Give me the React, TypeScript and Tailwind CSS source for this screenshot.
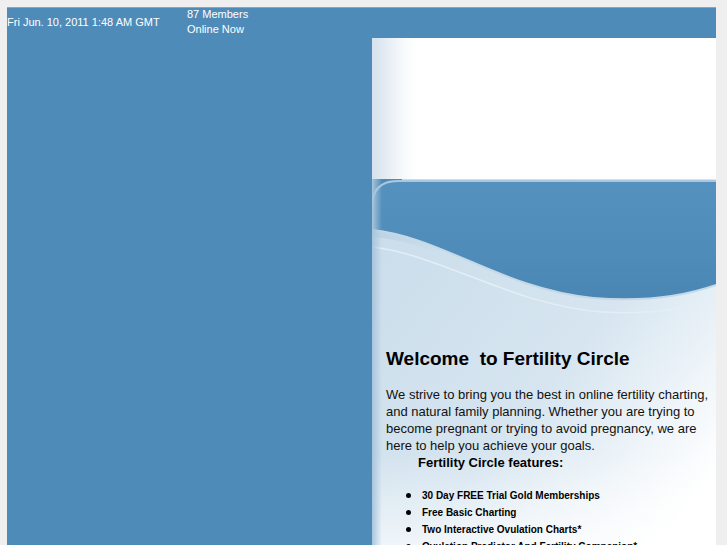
import type React from "react";

const features = [
  "30 Day FREE Trial Gold Memberships",
  "Free Basic Charting",
  "Two Interactive Ovulation Charts*",
  "Ovulation Predictor And Fertility Companion*",
];

function WaveArt(): React.ReactNode {
  return (
    <svg
      className="absolute left-0 top-0 h-[420px] w-full"
      viewBox="0 0 344 420"
      preserveAspectRatio="none"
    >
      <defs>
        <linearGradient id="light" x1="0" y1="0" x2="1" y2="1">
          <stop offset="0" stopColor="#c9dcea" />
          <stop offset="0.5" stopColor="#d6e5f0" />
          <stop offset="0.85" stopColor="#ffffff" />
        </linearGradient>
        <linearGradient id="dark" x1="0" y1="0" x2="0" y2="1">
          <stop offset="0" stopColor="#5591be" />
          <stop offset="0.6" stopColor="#4f8cba" />
          <stop offset="1" stopColor="#4986b4" />
        </linearGradient>
        <linearGradient id="haze" x1="0" y1="0" x2="1" y2="0">
          <stop offset="0" stopColor="#b7d0e3" stopOpacity="0.8" />
          <stop offset="0.5" stopColor="#b7d0e3" stopOpacity="0" />
        </linearGradient>
        <linearGradient id="fade" x1="0" y1="0" x2="0" y2="1">
          <stop offset="0" stopColor="#ffffff" stopOpacity="0" />
          <stop offset="0.65" stopColor="#ffffff" stopOpacity="0" />
          <stop offset="1" stopColor="#ffffff" stopOpacity="1" />
        </linearGradient>
      </defs>
      <rect x="0" y="0" width="344" height="420" fill="url(#light)" />
      <rect x="0" y="0" width="344" height="420" fill="url(#fade)" />
      <rect x="0" y="0" width="30" height="30" fill="#4e8bb9" />
      <path
        d="M0,51 L0,28 Q0,2 26,2 L344,2 L344,106 C310,118 270,123 221,119 C130,110 70,58 0,51 Z"
        fill="url(#dark)"
      />
      <path
        d="M0,51 C50,56 90,80 140,100 C60,70 30,60 0,58 Z"
        fill="url(#haze)"
      />
      <path
        d="M0,28 Q0,2 26,2 L344,2"
        fill="none"
        stroke="#a9c8df"
        strokeWidth="2"
      />
      <path
        d="M0,51 C70,58 130,110 221,119 C270,123 310,118 344,106"
        fill="none"
        stroke="#c4d9e8"
        strokeWidth="2"
      />
      <path
        d="M0,68 C70,76 140,126 230,133 C280,136 315,130 344,120"
        fill="none"
        stroke="#e3eef5"
        strokeWidth="1.5"
      />
    </svg>
  );
}

export default function App(): React.ReactNode {
  return (
    <div className="min-h-screen bg-[#efefef] pl-[7px] pt-[7px] font-['Liberation_Sans',Arial,sans-serif]">
      <div className="min-h-[560px] w-[709px] border-t border-[#7fa9c9] bg-[#4e8bb9]">
        <div className="flex h-[30px] text-[11px] text-white">
          <div className="w-[180px] pt-[7px] leading-[15px]">
            Fri Jun. 10, 2011 1:48 AM GMT
          </div>
          <div className="-mt-px leading-[15px]">
            <div>87 Members</div>
            <div>Online Now</div>
          </div>
        </div>
        <div className="flex">
          <div className="w-[365px] shrink-0" />
          <div className="w-[344px] shrink-0">
            <div className="h-[141px] bg-[linear-gradient(to_right,#d5e1ec,#f6f9fb_30px,#ffffff_45px)]" />
            <div className="relative min-h-[400px] overflow-hidden bg-white">
              <WaveArt />
              <div className="absolute left-0 top-0 h-full w-[10px] bg-[linear-gradient(to_right,#a8c5dc,rgba(168,197,220,0))]" />
              <div className="relative pl-[14px] pr-0 pt-[169px] text-black">
                <h1 className="text-[19px] font-bold leading-[22px]">
                  Welcome&nbsp; to Fertility Circle
                </h1>
                <p className="mt-[16px] text-[13px] leading-[17px] text-[#111]">
                  We strive to bring you the best in online fertility charting,
                  and natural family planning. Whether you are trying to become
                  pregnant or trying to avoid pregnancy, we are here to help you
                  achieve your goals.
                </p>
                <div className="pl-[32px] text-[13px] font-bold leading-[17px]">
                  Fertility Circle features:
                </div>
                <ul className="mt-[16px] text-[10px] font-bold leading-[17px]">
                  {features.map((f) => (
                    <li key={f} className="flex items-center">
                      <span className="ml-[20px] mr-[11px] h-[5px] w-[5px] rounded-full bg-black" />
                      {f}
                    </li>
                  ))}
                </ul>
              </div>
            </div>
          </div>
        </div>
      </div>
    </div>
  );
}
